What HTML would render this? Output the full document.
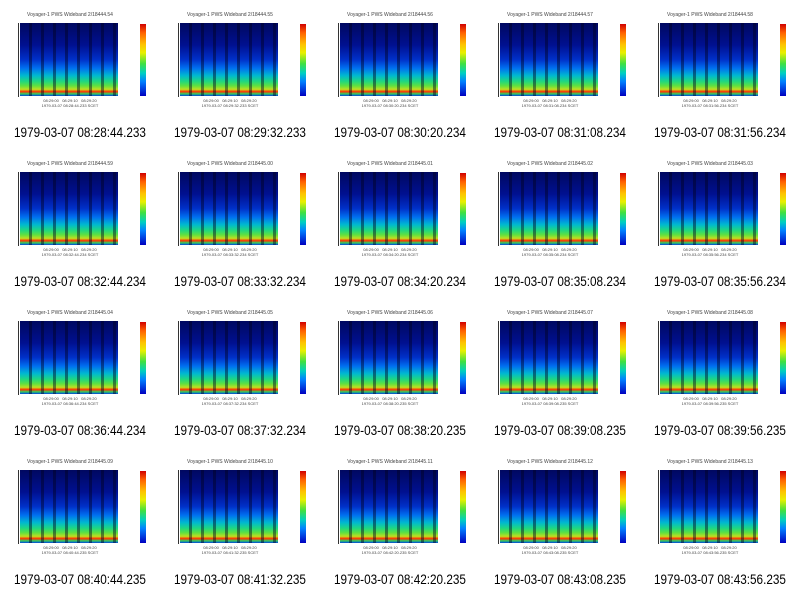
<!DOCTYPE html><html><head><style>
body{margin:0;background:#fff;width:800px;height:596px;position:relative;overflow:hidden;font-family:"Liberation Sans",sans-serif}
.c{position:absolute;width:160px;height:149px}
.t{position:absolute;top:12px;left:20px;width:100px;text-align:center;font-size:5px;color:#444}
.p{position:absolute;left:20px;top:23px;width:98px;height:73px;
background:repeating-linear-gradient(90deg,rgba(0,0,30,0) 0 9px,rgba(0,0,30,.45) 9px 12px),
linear-gradient(180deg,#000860 0%,#001090 30%,#0030c8 50%,#0070f0 62%,#00b8d0 72%,#20d880 80%,#60e040 86%,#c0e020 91%,#ff3000 94%,#30d060 97%,#0040e0 100%)}
.ax{position:absolute;left:18px;top:23px;width:1px;height:74px;background:#333}
.cb{position:absolute;left:140px;top:24px;width:6px;height:72px;background:linear-gradient(180deg,#d00000,#ff6000 12%,#ffc000 28%,#e8f000 40%,#40e040 55%,#00d0c0 68%,#0080ff 80%,#0000c0 100%)}
.x{position:absolute;left:10px;top:98px;width:120px;font-size:4px;color:#444;line-height:5px;text-align:center}
.l{position:absolute;top:125px;left:0;width:160px;text-align:center;font-size:13.5px;color:#000;transform:scaleX(.87)}
</style></head><body><script>
var L=["08:28:44.233","08:29:32.233","08:30:20.234","08:31:08.234","08:31:56.234","08:32:44.234","08:33:32.234","08:34:20.234","08:35:08.234","08:35:56.234","08:36:44.234","08:37:32.234","08:38:20.235","08:39:08.235","08:39:56.235","08:40:44.235","08:41:32.235","08:42:20.235","08:43:08.235","08:43:56.235"];
var T=["44.54","44.55","44.56","44.57","44.58","44.59","45.00","45.01","45.02","45.03","45.04","45.05","45.06","45.07","45.08","45.09","45.10","45.11","45.12","45.13"];
var h="";for(var i=0;i<20;i++){var c=i%5,r=Math.floor(i/5);
h+='<div class="c" style="left:'+(c*160)+'px;top:'+(r*149)+'px"><div class="t">Voyager-1 PWS Wideband 2/184'+T[i]+'</div><div class="ax"></div><div class="p"></div><div class="cb"></div><div class="x">08:29:00 &nbsp; 08:29:10 &nbsp; 08:29:20<br>1979-03-07 '+L[i]+' SCET</div><div class="l">1979-03-07 '+L[i]+'</div></div>';}
document.write(h);
</script></body></html>
